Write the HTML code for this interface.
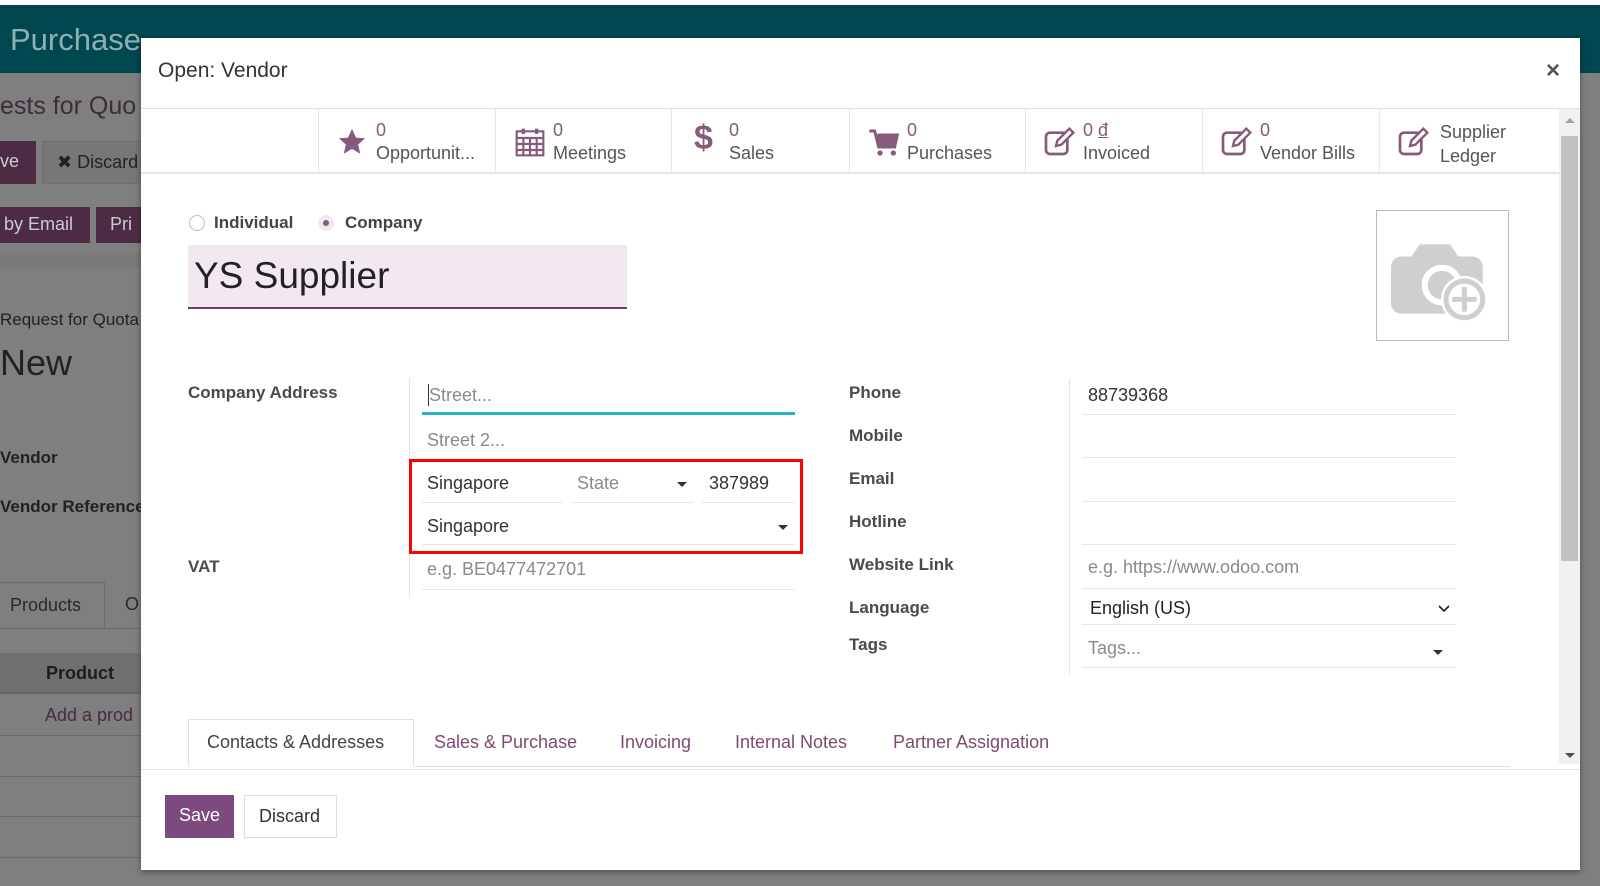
<!DOCTYPE html>
<html><head><meta charset="utf-8"><style>
*{box-sizing:border-box;margin:0;padding:0}
body{width:1600px;height:886px;overflow:hidden;position:relative;background:#7f7f7f;font-family:"Liberation Sans",sans-serif;color:#4c4c4c}
.a{position:absolute;white-space:nowrap}
.lbl{font-size:17px;font-weight:bold;color:#4a4a4a}
.ul{position:absolute;height:1px;background:#e4e6ea}
.ph{color:#8a8a8a}
.bb{position:absolute;top:109px;height:65px;border-left:1px solid #e6e6e6}
.bb .n{position:absolute;left:57px;top:11px;color:#875a7b;font-size:18px}
.bb .t{position:absolute;left:57px;top:34px;color:#555;font-size:18px}
.caret{width:0;height:0;border-left:5px solid transparent;border-right:5px solid transparent;border-top:5px solid #333;position:absolute}
</style></head><body>
<!-- background page -->
<div class="a" style="left:0;top:0;width:1600px;height:5px;background:#fff"></div>
<div class="a" style="left:0;top:5px;width:1600px;height:68px;background:#01474f"></div>
<div class="a" style="left:10px;top:22px;font-size:31px;color:#8fb0b3">Purchase</div>
<div class="a" style="left:0;top:92px;font-size:25px;color:#3e2c3a">ests for Quo</div>
<div class="a" style="left:0;top:141px;width:36px;height:43px;background:#4d2b45;color:#ccc;font-size:18px;padding:10px 0 0 0">ve</div>
<div class="a" style="left:42px;top:141px;width:110px;height:43px;background:#777;border:1px solid #6f6f6f;color:#222;font-size:18px;padding:10px 0 0 14px">✖ Discard</div>
<div class="a" style="left:0;top:207px;width:90px;height:36px;background:#4d2b45;color:#ccc;font-size:18px;padding:7px 0 0 4px">by Email</div>
<div class="a" style="left:96px;top:207px;width:60px;height:36px;background:#4d2b45;color:#ccc;font-size:18px;padding:7px 0 0 14px">Pri</div>
<div class="a" style="left:0;top:253px;width:141px;height:15px;background:#7a7a7a"></div>
<div class="a" style="left:0;top:310px;font-size:17px;color:#222">Request for Quota</div>
<div class="a" style="left:0;top:342px;font-size:36px;color:#222">New</div>
<div class="a" style="left:0;top:448px;font-size:17px;font-weight:bold;color:#222">Vendor</div>
<div class="a" style="left:0;top:497px;font-size:17px;font-weight:bold;color:#222">Vendor Reference</div>
<div class="a" style="left:0;top:582px;width:105px;height:47px;border:1px solid #6c6c6c;border-left:none;border-bottom:none;color:#2a2a2a;font-size:18px;padding:12px 0 0 10px">Products</div>
<div class="a" style="left:125px;top:594px;font-size:18px;color:#2a2a2a">O</div>
<div class="a" style="left:0;top:628px;width:141px;height:1px;background:#6c6c6c"></div>
<div class="a" style="left:0;top:653px;width:141px;height:41px;background:#707070;border-bottom:2px solid #666"></div>
<div class="a" style="left:46px;top:663px;font-size:18px;font-weight:bold;color:#1d1d1d">Product</div>
<div class="a" style="left:45px;top:705px;font-size:18px;color:#4a2a44">Add a prod</div>
<div class="a" style="left:0;top:735px;width:141px;height:1px;background:#6c6c6c"></div>
<div class="a" style="left:0;top:776px;width:141px;height:1px;background:#6c6c6c"></div>
<div class="a" style="left:0;top:816px;width:141px;height:1px;background:#6c6c6c"></div>
<div class="a" style="left:0;top:857px;width:141px;height:1px;background:#6c6c6c"></div>

<!-- modal -->
<div class="a" style="left:141px;top:38px;width:1439px;height:832px;background:#fff;box-shadow:0 2px 6px rgba(0,0,0,.4)"></div>
<div class="a" style="left:158px;top:59px;font-size:21px;color:#333">Open: Vendor</div>
<div class="a" style="left:1546px;top:57px;font-size:24px;color:#555;font-weight:bold">×</div>
<div class="a" style="left:141px;top:108px;width:1439px;height:1px;background:#dee2e6"></div>
<!-- button box -->
<div class="a" style="left:141px;top:172px;width:1418px;height:2px;background:#e4e6ea"></div>
<div class="bb" style="left:318px;width:177px">
 <svg class="a" style="left:18px;top:18px" width="30" height="30" viewBox="0 0 24 24"><path d="M12 1.5l3.2 7 7.3.6-5.6 4.9 1.7 7.4L12 17.5 5.4 21.4l1.7-7.4L1.5 9.1l7.3-.6z" fill="#875a7b"/></svg>
 <div class="n">0</div><div class="t">Opportunit...</div></div>
<div class="bb" style="left:495px;width:176px">
 <svg class="a" style="left:18px;top:17px" width="32" height="32" viewBox="0 0 24 24" fill="none" stroke="#875a7b" stroke-width="1.6"><rect x="2" y="4" width="20" height="18"/><path d="M2 9h20M2 13.5h20M2 18h20M7 9v13M12 9v13M17 9v13"/><path d="M7 2v4M17 2v4" stroke-width="2.4"/></svg>
 <div class="n">0</div><div class="t">Meetings</div></div>
<div class="bb" style="left:671px;width:178px">
 <div class="a" style="left:22px;top:10px;font-size:34px;font-weight:bold;color:#875a7b">$</div>
 <div class="n">0</div><div class="t">Sales</div></div>
<div class="bb" style="left:849px;width:176px">
 <svg class="a" style="left:18px;top:19px" width="32" height="30" viewBox="0 0 24 22"><path d="M1 2h4l3 12h12l2-9H7" fill="none" stroke="#875a7b" stroke-width="2.2"/><path d="M7 5h15l-2 9H8z" fill="#875a7b"/><circle cx="9" cy="18.5" r="2" fill="#875a7b"/><circle cx="19" cy="18.5" r="2" fill="#875a7b"/></svg>
 <div class="n">0</div><div class="t">Purchases</div></div>
<div class="bb" style="left:1025px;width:177px">
 <svg class="a" style="left:18px;top:18px" width="32" height="30" viewBox="0 0 24 22"><rect x="1.5" y="4" width="16" height="16" rx="3" fill="none" stroke="#875a7b" stroke-width="2"/><path d="M9 14l1-4L19 1l3 3-9 9z" fill="#fff" stroke="#875a7b" stroke-width="1.8"/></svg>
 <div class="n">0 <u>đ</u></div><div class="t">Invoiced</div></div>
<div class="bb" style="left:1202px;width:177px">
 <svg class="a" style="left:18px;top:18px" width="32" height="30" viewBox="0 0 24 22"><rect x="1.5" y="4" width="16" height="16" rx="3" fill="none" stroke="#875a7b" stroke-width="2"/><path d="M9 14l1-4L19 1l3 3-9 9z" fill="#fff" stroke="#875a7b" stroke-width="1.8"/></svg>
 <div class="n">0</div><div class="t">Vendor Bills</div></div>
<div class="bb" style="left:1379px;width:180px">
 <svg class="a" style="left:18px;top:18px" width="32" height="30" viewBox="0 0 24 22"><rect x="1.5" y="4" width="16" height="16" rx="3" fill="none" stroke="#875a7b" stroke-width="2"/><path d="M9 14l1-4L19 1l3 3-9 9z" fill="#fff" stroke="#875a7b" stroke-width="1.8"/></svg>
 <div class="a" style="left:60px;top:11px;font-size:18px;color:#555;line-height:24px">Supplier<br>Ledger</div></div>
<!-- scrollbar -->
<div class="a" style="left:1559px;top:109px;width:21px;height:655px;background:#f1f1f1"></div>
<div class="a" style="left:1561px;top:136px;width:17px;height:425px;background:#c1c1c1"></div>
<div class="a" style="left:1565px;top:118px;border-left:5px solid transparent;border-right:5px solid transparent;border-bottom:5px solid #a3a3a3;width:0;height:0"></div>
<div class="a" style="left:1565px;top:753px;border-left:5px solid transparent;border-right:5px solid transparent;border-top:5px solid #505050;width:0;height:0"></div>

<!-- radios -->
<div class="a" style="left:189px;top:215px;width:16px;height:16px;border:1px solid #bbb;border-radius:50%"></div>
<div class="a" style="left:214px;top:213px;font-size:17px;font-weight:bold;color:#444">Individual</div>
<div class="a" style="left:318px;top:215px;width:16px;height:16px;background:#f0eaf0;border-radius:50%"><div style="margin:5px;width:6px;height:6px;border-radius:50%;background:#875a7b"></div></div>
<div class="a" style="left:345px;top:213px;font-size:17px;font-weight:bold;color:#444">Company</div>
<div class="a" style="left:188px;top:245px;width:439px;height:64px;background:#f2e8f2;border-bottom:2px solid #71396b"></div>
<div class="a" style="left:194px;top:255px;font-size:37px;color:#222">YS Supplier</div>
<div class="a" style="left:1376px;top:210px;width:133px;height:131px;border:1px solid #bbb;background:#fff">
 <svg style="position:absolute;left:14px;top:24px" width="106" height="90" viewBox="0 0 104 86"><path d="M28 8h30l8 12h14a10 10 0 0 1 10 10v36a10 10 0 0 1-10 10H10A10 10 0 0 1 0 66V30a10 10 0 0 1 10-10h10z" fill="#cfcfcf"/><circle cx="50" cy="48" r="20" fill="#fff"/><circle cx="50" cy="48" r="14" fill="#cfcfcf"/><circle cx="72" cy="62" r="23" fill="#fff"/><circle cx="72" cy="62" r="18" fill="#fff" stroke="#cfcfcf" stroke-width="5"/><path d="M72 50v24M60 62h24" stroke="#cfcfcf" stroke-width="5"/></svg></div>

<!-- left group -->
<div class="a lbl" style="left:188px;top:383px">Company Address</div>
<div class="a" style="left:409px;top:378px;width:1px;height:219px;background:#e2e2e2"></div>
<div class="a" style="left:428px;top:384px;width:1px;height:22px;background:#333"></div>
<div class="a ph" style="left:429px;top:385px;font-size:18px">Street...</div>
<div class="a" style="left:422px;top:412px;width:373px;height:3px;background:#21b6c8"></div>
<div class="a ph" style="left:427px;top:430px;font-size:18px">Street 2...</div>
<div class="a" style="left:427px;top:473px;font-size:18px;color:#333">Singapore</div>
<div class="ul" style="left:422px;top:502px;width:140px"></div>
<div class="a ph" style="left:577px;top:473px;font-size:18px">State</div>
<div class="caret" style="left:677px;top:482px"></div>
<div class="ul" style="left:571px;top:502px;width:123px"></div>
<div class="a" style="left:709px;top:473px;font-size:18px;color:#333">387989</div>
<div class="ul" style="left:702px;top:502px;width:93px"></div>
<div class="a" style="left:427px;top:516px;font-size:18px;color:#333">Singapore</div>
<div class="caret" style="left:778px;top:525px"></div>
<div class="ul" style="left:422px;top:544px;width:373px"></div>
<div class="a" style="left:409px;top:459px;width:394px;height:95px;border:3px solid #f00"></div>
<div class="a lbl" style="left:188px;top:557px">VAT</div>
<div class="a ph" style="left:427px;top:559px;font-size:18px">e.g. BE0477472701</div>
<div class="ul" style="left:422px;top:589px;width:373px"></div>

<!-- right group -->
<div class="a lbl" style="left:849px;top:383px">Phone</div>
<div class="a lbl" style="left:849px;top:426px">Mobile</div>
<div class="a lbl" style="left:849px;top:469px">Email</div>
<div class="a lbl" style="left:849px;top:512px">Hotline</div>
<div class="a lbl" style="left:849px;top:555px">Website Link</div>
<div class="a lbl" style="left:849px;top:598px">Language</div>
<div class="a lbl" style="left:849px;top:635px">Tags</div>
<div class="a" style="left:1069px;top:378px;width:1px;height:296px;background:#e2e2e2"></div>
<div class="a" style="left:1088px;top:385px;font-size:18px;color:#333">88739368</div>
<div class="ul" style="left:1082px;top:414px;width:374px"></div>
<div class="ul" style="left:1082px;top:457px;width:374px"></div>
<div class="ul" style="left:1082px;top:501px;width:374px"></div>
<div class="ul" style="left:1082px;top:544px;width:374px"></div>
<div class="a ph" style="left:1088px;top:557px;font-size:18px">e.g. https://www.odoo.com</div>
<div class="ul" style="left:1082px;top:588px;width:374px"></div>
<div class="a" style="left:1090px;top:598px;font-size:18px;color:#222">English (US)</div>
<svg class="a" style="left:1437px;top:604px" width="14" height="10" viewBox="0 0 14 10"><path d="M2 2l5 5 5-5" fill="none" stroke="#222" stroke-width="1.6"/></svg>
<div class="ul" style="left:1082px;top:624px;width:374px"></div>
<div class="a ph" style="left:1088px;top:638px;font-size:18px">Tags...</div>
<div class="caret" style="left:1433px;top:650px"></div>
<div class="ul" style="left:1082px;top:667px;width:374px"></div>

<!-- tabs -->
<div class="a" style="left:188px;top:766px;width:1322px;height:1px;background:#dee2e6"></div>
<div class="a" style="left:188px;top:719px;width:226px;height:48px;border:1px solid #dee2e6;border-bottom:1px solid #fff;background:#fff"></div>
<div class="a" style="left:207px;top:732px;font-size:18px;color:#444">Contacts &amp; Addresses</div>
<div class="a" style="left:434px;top:732px;font-size:18px;color:#7c4a74">Sales &amp; Purchase</div>
<div class="a" style="left:620px;top:732px;font-size:18px;color:#7c4a74">Invoicing</div>
<div class="a" style="left:735px;top:732px;font-size:18px;color:#7c4a74">Internal Notes</div>
<div class="a" style="left:893px;top:732px;font-size:18px;color:#7c4a74">Partner Assignation</div>
<div class="a" style="left:141px;top:769px;width:1439px;height:1px;background:#e4e4e4"></div>
<div class="a" style="left:165px;top:795px;width:69px;height:43px;background:#7c4a7e;color:#fff;font-size:18px;padding:10px 0 0 14px">Save</div>
<div class="a" style="left:244px;top:795px;width:93px;height:43px;border:1px solid #ddd;color:#333;font-size:18px;padding:10px 0 0 14px">Discard</div>
</body></html>
